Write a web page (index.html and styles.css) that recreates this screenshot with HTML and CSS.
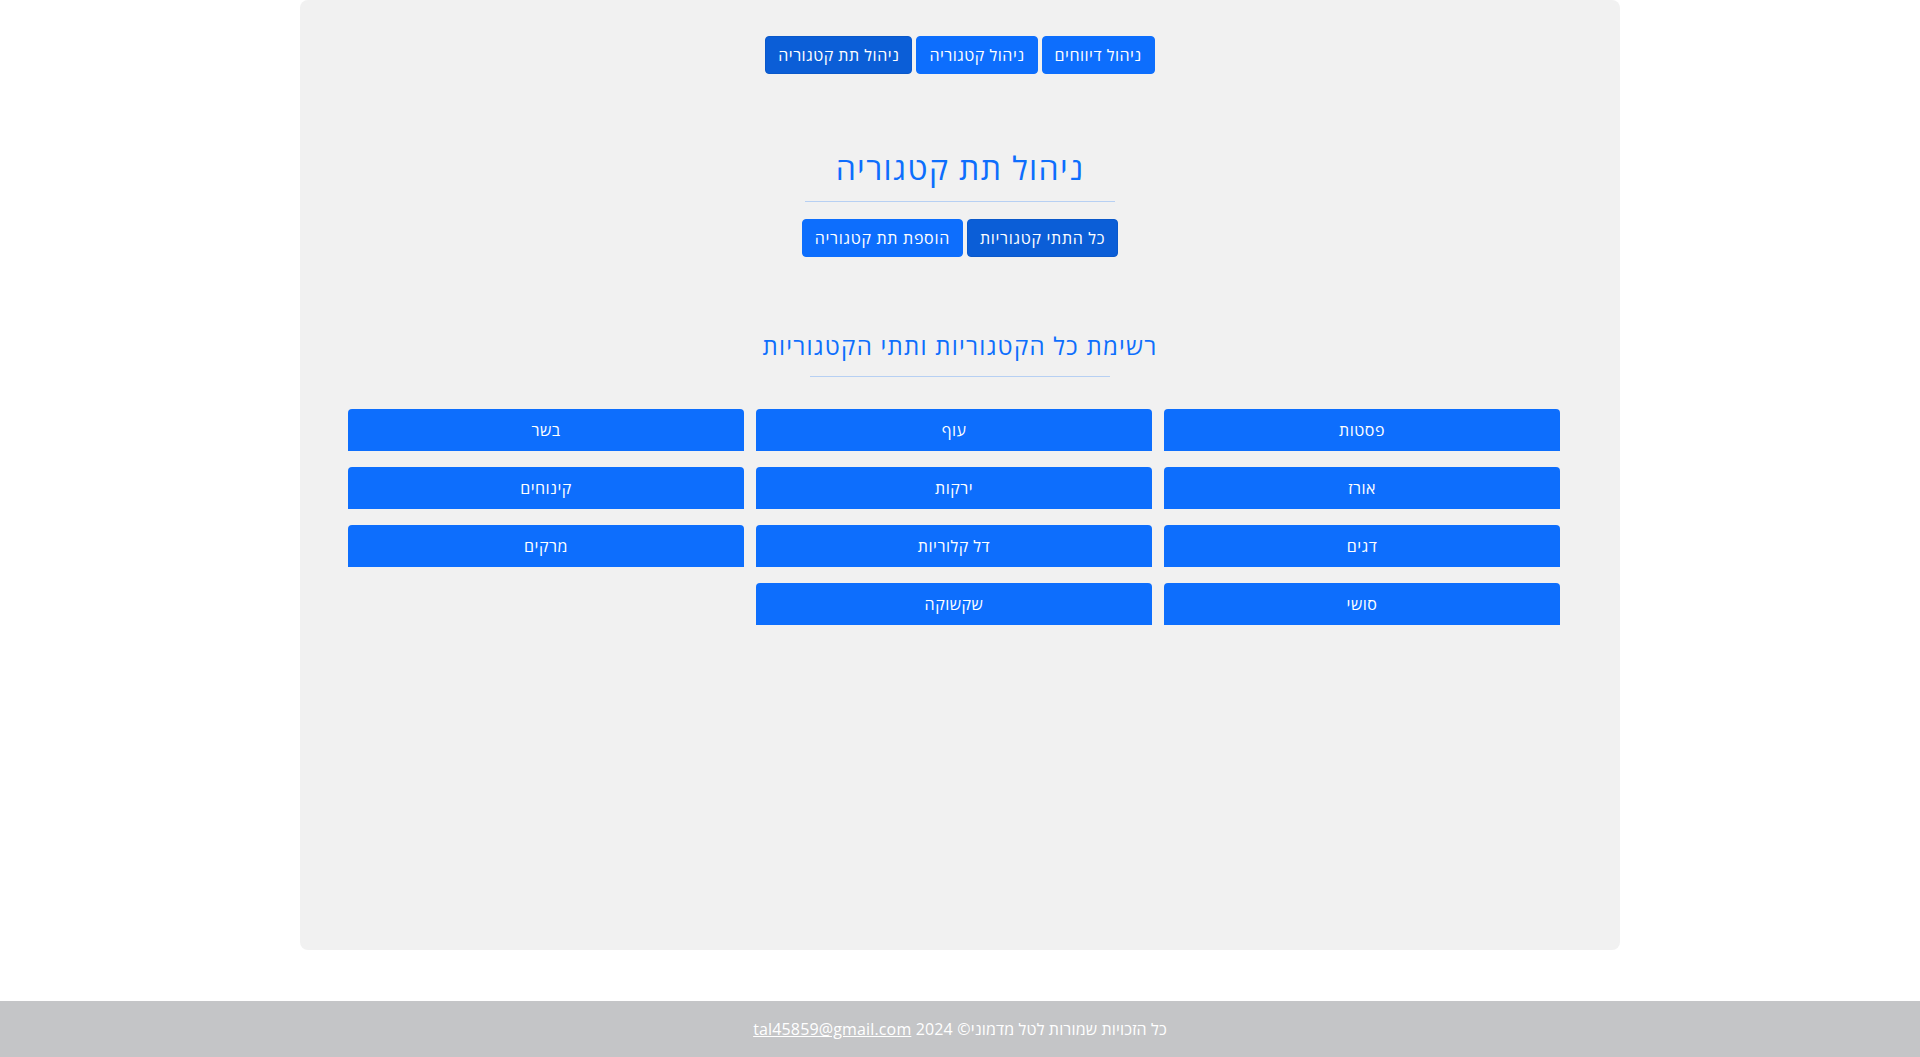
FILE: index.html
```html
<!DOCTYPE html>
<html lang="he" dir="rtl">
<head>
<meta charset="utf-8">
<title>ניהול תת קטגוריה</title>
<link rel="stylesheet" href="styles.css">
</head>
<body>
<main class="panel">
  <nav class="top-nav">
    <a class="btn" href="#">ניהול דיווחים</a>
    <a class="btn" href="#">ניהול קטגוריה</a>
    <a class="btn active" href="#">ניהול תת קטגוריה</a>
  </nav>
  <section class="section-head">
    <h1 class="title">ניהול תת קטגוריה</h1>
    <hr class="rule rule-main">
    <div class="sub-nav">
      <a class="btn active" href="#">כל התתי קטגוריות</a>
      <a class="btn" href="#">הוספת תת קטגוריה</a>
    </div>
  </section>
  <section class="list">
    <h2 class="subtitle">רשימת כל הקטגוריות ותתי הקטגוריות</h2>
    <hr class="rule rule-sub">
    <div class="grid">
      <a class="cat" href="#">פסטות</a>
      <a class="cat" href="#">עוף</a>
      <a class="cat" href="#">בשר</a>
      <a class="cat" href="#">אורז</a>
      <a class="cat" href="#">ירקות</a>
      <a class="cat" href="#">קינוחים</a>
      <a class="cat" href="#">דגים</a>
      <a class="cat" href="#">דל קלוריות</a>
      <a class="cat" href="#">מרקים</a>
      <a class="cat" href="#">סושי</a>
      <a class="cat" href="#">שקשוקה</a>
    </div>
  </section>
</main>
<footer class="footer">
  <span>כל הזכויות שמורות לטל מדמוני© 2024 <a class="mail" href="#">tal45859@gmail.com</a></span>
</footer>
</body>
</html>
```

FILE: styles.css
```css
* { box-sizing: border-box; }
html, body { margin: 0; padding: 0; }
body {
  font-family: "Open Sans", "Liberation Sans", sans-serif;
  font-size: 16px;
  line-height: 1.5;
  color: #212529;
  background: #fff;
}
.panel {
  width: 1320px;
  height: 950px;
  margin: 0 auto;
  background: #f1f1f1;
  border-radius: 8px;
  padding: 36px 48px;
}
.top-nav, .sub-nav {
  display: flex;
  justify-content: center;
  gap: 4px;
}
.btn {
  display: inline-block;
  padding: 6px 12px;
  font-size: 16px;
  line-height: 24px;
  letter-spacing: 0.5px;
  color: #fff;
  background: #0d6efd;
  border: 1px solid #0d6efd;
  border-radius: 4px;
  text-decoration: none;
}
.sub-nav .btn { letter-spacing: 0.7px; }
.btn.active {
  background: #0b5ed7;
  border-color: #0a58ca;
}
.section-head {
  display: flex;
  flex-direction: column;
  align-items: center;
  margin-top: 75px;
}
.title {
  margin: 0;
  font-size: 32px;
  font-weight: 400;
  line-height: 38px;
  letter-spacing: 1.4px;
  color: #0d6efd;
}
.rule {
  border: 0;
  border-top: 1px solid #0d6efd;
  opacity: .25;
  margin: 0;
}
.rule-main { width: 310px; margin: 14px 0 17px; }
.list {
  display: flex;
  flex-direction: column;
  align-items: center;
  margin-top: 74px;
}
.subtitle {
  margin: 0;
  font-size: 24px;
  font-weight: 400;
  line-height: 30px;
  letter-spacing: 1.25px;
  color: #0d6efd;
}
.rule-sub { width: 300px; margin: 15px 0 32px; }
.grid {
  align-self: stretch;
  margin-right: 12px;
  display: grid;
  grid-template-columns: repeat(3, 1fr);
  column-gap: 12px;
  row-gap: 16px;
}
.cat {
  display: flex;
  align-items: center;
  justify-content: center;
  height: 42px;
  background: #0d6efd;
  color: #fff;
  text-decoration: none;
  border-radius: 4px 4px 0 0;
  font-size: 16px;
  letter-spacing: 0.5px;
}
.footer {
  margin-top: 51px;
  height: 56px;
  background: #c4c5c7;
  color: #fff;
  display: flex;
  align-items: center;
  justify-content: center;
  font-size: 16px;
  letter-spacing: 0.15px;
}
.footer a { color: #fff; text-decoration: underline; }
```
